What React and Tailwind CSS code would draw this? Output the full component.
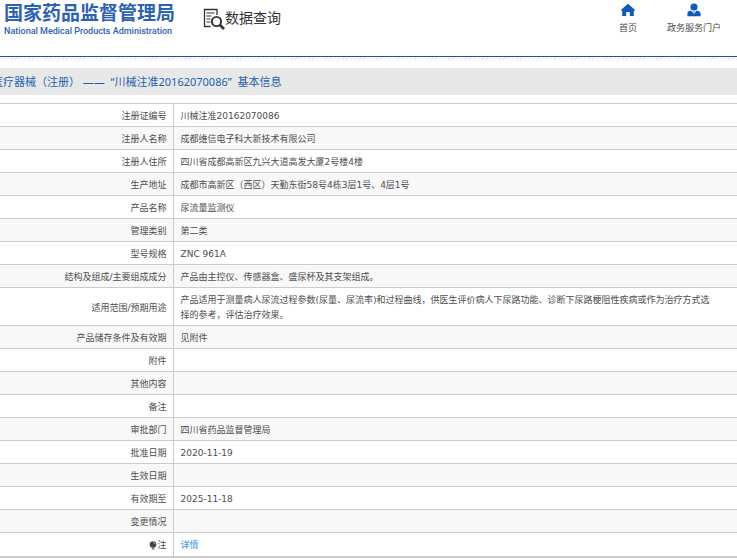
import React from 'react';

const rows = [
  { label: '注册证编号', value: '川械注准20162070086' },
  { label: '注册人名称', value: '成都维信电子科大新技术有限公司' },
  { label: '注册人住所', value: '四川省成都高新区九兴大道高发大厦2号楼4楼' },
  { label: '生产地址', value: '成都市高新区（西区）天勤东街58号4栋3层1号、4层1号' },
  { label: '产品名称', value: '尿流量监测仪' },
  { label: '管理类别', value: '第二类' },
  { label: '型号规格', value: 'ZNC 961A' },
  { label: '结构及组成/主要组成成分', value: '产品由主控仪、传感器盒、盛尿杯及其支架组成。' },
  {
    label: '适用范围/预期用途',
    value:
      '产品适用于测量病人尿流过程参数(尿量、尿流率)和过程曲线，供医生评价病人下尿路功能、诊断下尿路梗阻性疾病或作为治疗方式选择的参考，评估治疗效果。',
  },
  { label: '产品储存条件及有效期', value: '见附件' },
  { label: '附件', value: '' },
  { label: '其他内容', value: '' },
  { label: '备注', value: '' },
  { label: '审批部门', value: '四川省药品监督管理局' },
  { label: '批准日期', value: '2020-11-19' },
  { label: '生效日期', value: '' },
  { label: '有效期至', value: '2025-11-18' },
  { label: '变更情况', value: '' },
];

function SearchDocIcon() {
  return (
    <svg width="22" height="22" viewBox="0 0 22 22" fill="none" stroke="#2f3338">
      <path d="M14 7V1.500H1.500v17H7.500" strokeWidth="1.300" />
      <path d="M3.500 5h8M3.500 8h5M3.500 11h4M3.500 14h4" strokeWidth="1.200" />
      <circle cx="13.500" cy="13.500" r="4.600" strokeWidth="1.900" />
      <path d="M17 17l4 4" strokeWidth="2.600" />
    </svg>
  );
}

function HomeIcon() {
  return (
    <svg width="14" height="14" viewBox="0 0 14 14" fill="#0d5cbd">
      <path d="M7 .8L.4 6.500V8h.8v5h4V9h3.600v4h4V8h.8V6.500z" />
    </svg>
  );
}

function UserIcon() {
  return (
    <svg width="14" height="14" viewBox="0 0 14 14" fill="#0d5cbd">
      <circle cx="7" cy="4" r="3.600" />
      <path d="M.4 13.200V11c0-2 1.200-3 3.800-3.400L7 11l2.800-3.400c2.600.4 3.800 1.400 3.800 3.400v2.200z" />
      <path d="M6.200 8.400h1.600L7.400 9.400 7 10.800l-.4-1.400z" />
    </svg>
  );
}

function BulbIcon() {
  return (
    <svg width="8" height="9" viewBox="0 0 8 9" className="inline-block">
      <circle cx="4" cy="3.500" r="3.300" fill="#444" />
      <path d="M2.800 6h2.400v2.600H2.800z" fill="#777" />
      <path d="M4.300 1.300a2 2 0 0 1 1.600 1.800" stroke="#ddd" strokeWidth=".8" fill="none" />
    </svg>
  );
}

export default function App() {
  return (
    <div className="overflow-x-hidden bg-white font-['Noto_Sans','Noto_Sans_CJK_SC',sans-serif] text-[#4d4d4d]">
      <header className="flex h-14 items-start justify-between pr-4 pl-1">
        <div className="flex items-start">
          <div className="w-[199px] whitespace-nowrap text-[#2c62b4]">
            <h1 className="pt-[3px] text-[19px] leading-5 font-bold">国家药品监督管理局</h1>
            <p className="font-['Roboto',sans-serif] text-[9px] leading-4 font-medium">
              National Medical Products Administration
            </p>
          </div>
          <div className="flex items-start pt-2 text-[#333]">
            <SearchDocIcon />
            <span className="text-[14px] leading-[19px] whitespace-nowrap">数据查询</span>
          </div>
        </div>
        <nav className="flex gap-[30px] pt-[3px] text-[9px] leading-[13px]">
          <a href="#home" className="flex flex-col items-center gap-1">
            <HomeIcon />
            首页
          </a>
          <a href="#portal" className="flex flex-col items-center gap-1">
            <UserIcon />
            政务服务门户
          </a>
        </nav>
      </header>
      <div className="h-1 border-t border-[#1b5795] bg-[repeating-linear-gradient(135deg,#dce9f7_0_1px,#fff_1px_3px)]" />

      <h2 className="mt-2 mb-2 h-[27px] bg-[#e8e8e8] text-[11px] leading-[27px] whitespace-nowrap text-[#1c62b0]">
        <span className="-ml-2">医疗器械（注册） ——&nbsp; “川械注准20162070086”&nbsp; 基本信息</span>
      </h2>

      <table className="w-full border-collapse border-t border-b-2 border-[#ccc] font-['DejaVu_Sans','Noto_Sans_CJK_SC',sans-serif] text-[9px] leading-[15px]">
        <colgroup>
          <col className="w-[173px]" />
          <col />
        </colgroup>
        <tbody>
          {rows.map((row) => (
            <tr key={row.label} className="border-b border-[#ccc] even:bg-[#f8f8f8]">
              <th className="h-[23px] border-r border-[#ccc] pt-[5px] pr-[6px] pb-[2px] text-right font-normal">
                {row.label}
              </th>
              <td className="pt-[5px] pr-6 pb-[2px] pl-[7px]">{row.value}</td>
            </tr>
          ))}
          <tr>
            <th className="h-6 border-r border-[#ccc] pt-[5px] pr-[6px] pb-[2px] text-right font-normal">
              <BulbIcon />注
            </th>
            <td className="pt-[5px] pb-[2px] pl-[7px]">
              <a href="#detail" className="text-[#2f93f0]">
                详情
              </a>
            </td>
          </tr>
        </tbody>
      </table>
    </div>
  );
}
